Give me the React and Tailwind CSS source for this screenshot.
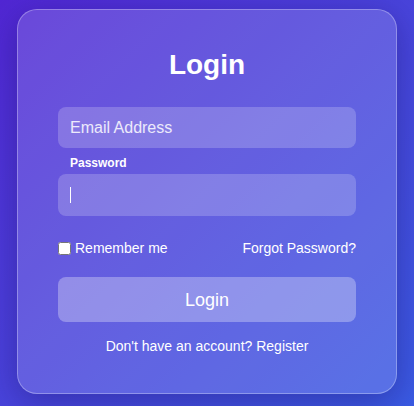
import React, { useState } from "react";

const App = () => {
  const [email, setEmail] = useState("");
  const [password, setPassword] = useState("");
  const [remember, setRemember] = useState(false);

  return (
    <div
      className="min-h-screen w-full flex justify-center pt-[9px] bg-gradient-to-br from-[#5126d3] to-[#3a5be3] text-white"
      style={{ fontFamily: '"Liberation Sans", Arial, sans-serif' }}
    >
      <div className="w-[380px] h-fit rounded-[20px] border border-white/30 bg-white/15 shadow-[0_8px_32px_rgba(20,10,90,0.35)] px-10 pt-[39px] pb-[39px]">
        <h1 className="text-center text-[28px] font-bold leading-8 mb-[26px]">Login</h1>

        <input
          type="email"
          value={email}
          onChange={(e) => setEmail(e.target.value)}
          placeholder="Email Address"
          className="block w-full h-[41px] px-3 rounded-lg bg-white/20 text-base text-white placeholder-white/85 outline-none"
        />

        <label className="block mt-2 mb-[3px] pl-3 text-xs font-bold leading-[15px]">Password</label>
        <div className="relative">
          <input
            type="password"
            value={password}
            onChange={(e) => setPassword(e.target.value)}
            className="block w-full h-[42px] px-3 rounded-lg bg-white/20 text-base text-white caret-white outline-none"
          />
          {/* text caret of the focused field */}
          {!password && <span className="pointer-events-none absolute left-3 top-[13px] h-[16px] w-px bg-white" />}
        </div>

        <div className="mt-[24px] flex items-center justify-between text-sm leading-[17px]">
          <label className="flex items-center">
            <input
              type="checkbox"
              checked={remember}
              onChange={(e) => setRemember(e.target.checked)}
              className="m-0 mr-1 w-[13px] h-[13px]"
            />
            Remember me
          </label>
          <a href="#" className="text-white">Forgot Password?</a>
        </div>

        <button className="mt-[20px] block w-full h-[45px] rounded-lg bg-white/30 text-lg text-white">
          Login
        </button>

        <p className="mt-[16px] text-center text-sm leading-4">
          Don't have an account? <a href="#">Register</a>
        </p>
      </div>
    </div>
  );
};

export default App;
